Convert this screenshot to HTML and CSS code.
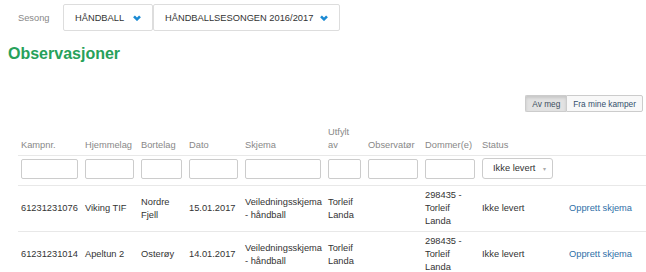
FILE: index.html
```html
<!DOCTYPE html>
<html>
<head>
  <title>Observasjoner</title>
  <link rel="stylesheet" href="styles.css">
</head>
<body>
  <div class="season-bar">
    <span class="season-label">Sesong</span>
    <div class="select select-sport">
      <span>HÅNDBALL</span>
      <svg class="chevron" width="8" height="6" viewBox="0 0 8 6"><polyline points="1,1.3 4,4.3 7,1.3" /></svg>
    </div>
    <div class="select select-season">
      <span>HÅNDBALLSESONGEN 2016/2017</span>
      <svg class="chevron" width="8" height="6" viewBox="0 0 8 6"><polyline points="1,1.3 4,4.3 7,1.3" /></svg>
    </div>
  </div>

  <h1 class="title">Observasjoner</h1>

  <div class="toolbar">
    <div class="btn-group">
      <button class="btn active">Av meg</button>
      <button class="btn">Fra mine kamper</button>
    </div>
  </div>

  <table class="obs-table">
    <colgroup>
      <col style="width: 64px">
      <col style="width: 56px">
      <col style="width: 48px">
      <col style="width: 56px">
      <col style="width: 83px">
      <col style="width: 40px">
      <col style="width: 57px">
      <col style="width: 57px">
      <col style="width: 87px">
      <col style="width: 80px">
    </colgroup>
    <thead>
      <tr class="head-row">
        <th>Kampnr.</th>
        <th>Hjemmelag</th>
        <th>Bortelag</th>
        <th>Dato</th>
        <th>Skjema</th>
        <th>Utfylt av</th>
        <th>Observatør</th>
        <th>Dommer(e)</th>
        <th>Status</th>
        <th></th>
      </tr>
      <tr class="filter-row">
        <td><input type="text"></td>
        <td><input type="text"></td>
        <td><input type="text"></td>
        <td><input type="text"></td>
        <td><input type="text"></td>
        <td><input type="text"></td>
        <td><input type="text"></td>
        <td><input type="text"></td>
        <td><div class="status-select">Ikke levert <span class="caret">▾</span></div></td>
        <td></td>
      </tr>
    </thead>
    <tbody>
      <tr>
        <td>61231231076</td>
        <td>Viking TIF</td>
        <td>Nordre Fjell</td>
        <td>15.01.2017</td>
        <td>Veiledningsskjema - håndball</td>
        <td>Torleif Landa</td>
        <td></td>
        <td>298435 - Torleif Landa</td>
        <td>Ikke levert</td>
        <td><a class="create-link" href="#">Opprett skjema</a></td>
      </tr>
      <tr>
        <td>61231231014</td>
        <td>Apeltun 2</td>
        <td>Osterøy</td>
        <td>14.01.2017</td>
        <td>Veiledningsskjema - håndball</td>
        <td>Torleif Landa</td>
        <td></td>
        <td>298435 - Torleif Landa</td>
        <td>Ikke levert</td>
        <td><a class="create-link" href="#">Opprett skjema</a></td>
      </tr>
    </tbody>
  </table>
</body>
</html>
```

FILE: styles.css
```css
/* Observasjoner page */
body {
  margin: 0;
  background-color: #fff;
  font-family: "Liberation Sans", Arial, sans-serif;
  font-size: 9.3px;
  color: #333;
  overflow: hidden;
}

/* Season picker */
.season-bar {
  display: flex;
  align-items: center;
  padding: 4px 0 0 18px;
}

.season-label {
  color: #888;
  width: 45px;
}

.select {
  display: flex;
  align-items: center;
  justify-content: space-between;
  box-sizing: border-box;
  height: 27px;
  border: 1px solid #ddd;
  border-radius: 2px;
  color: #333;
  padding: 0 11px 0 11px;
}

.select-sport {
  width: 90px;
}

.select-season {
  width: 187px;
}

.chevron polyline {
  fill: none;
  stroke: #1b8ad3;
  stroke-width: 2.6;
}

/* Title */
.title {
  margin: 13px 0 0 8px;
  font-size: 16px;
  line-height: 20px;
  font-weight: bold;
  color: #27a15a;
}

/* Filter buttons */
.toolbar {
  display: flex;
  justify-content: flex-end;
  margin-top: 31px;
  padding-right: 3px;
}

.btn-group {
  display: flex;
}

.btn {
  height: 17px;
  padding: 0 6px;
  border: 1px solid #ccc;
  background-color: #f8f8f8;
  font-family: inherit;
  font-size: 8.3px;
  color: #34506c;
}

.btn:first-child {
  border-radius: 2px 0 0 2px;
  border-right: none;
}

.btn:last-child {
  border-radius: 0 2px 2px 0;
}

.btn.active {
  background-color: #e2e2e2;
  box-shadow: inset 0 2px 3px rgba(0, 0, 0, 0.12);
  color: #3d4f60;
}

/* Table */
.obs-table {
  margin: 14px 0 0 18px;
  width: 628px;
  table-layout: fixed;
  border-collapse: separate;
  border-spacing: 0;
  line-height: 13px;
}

.obs-table th,
.obs-table td {
  padding: 3px 4px 3px 3px;
  text-align: left;
  border-bottom: 1px solid #e8e8e8;
  vertical-align: middle;
}

.head-row th {
  padding-top: 0;
  vertical-align: bottom;
  font-weight: normal;
  color: #888;
}

.filter-row td {
  padding-bottom: 6px;
  vertical-align: top;
}

.filter-row input {
  display: block;
  box-sizing: border-box;
  width: 100%;
  height: 20px;
  margin: 0;
  border: 1px solid #ccc;
  border-radius: 2px;
}

.status-select {
  box-sizing: border-box;
  width: 71px;
  height: 21px;
  margin-top: -1px;
  padding: 0 0 0 10px;
  border: 1px solid #ccc;
  border-radius: 3px;
  line-height: 19px;
  color: #333;
}

.caret {
  margin-left: 5px;
  font-size: 6px;
  color: #aaa;
}

.create-link {
  color: #2f6fa7;
  text-decoration: none;
}
```
